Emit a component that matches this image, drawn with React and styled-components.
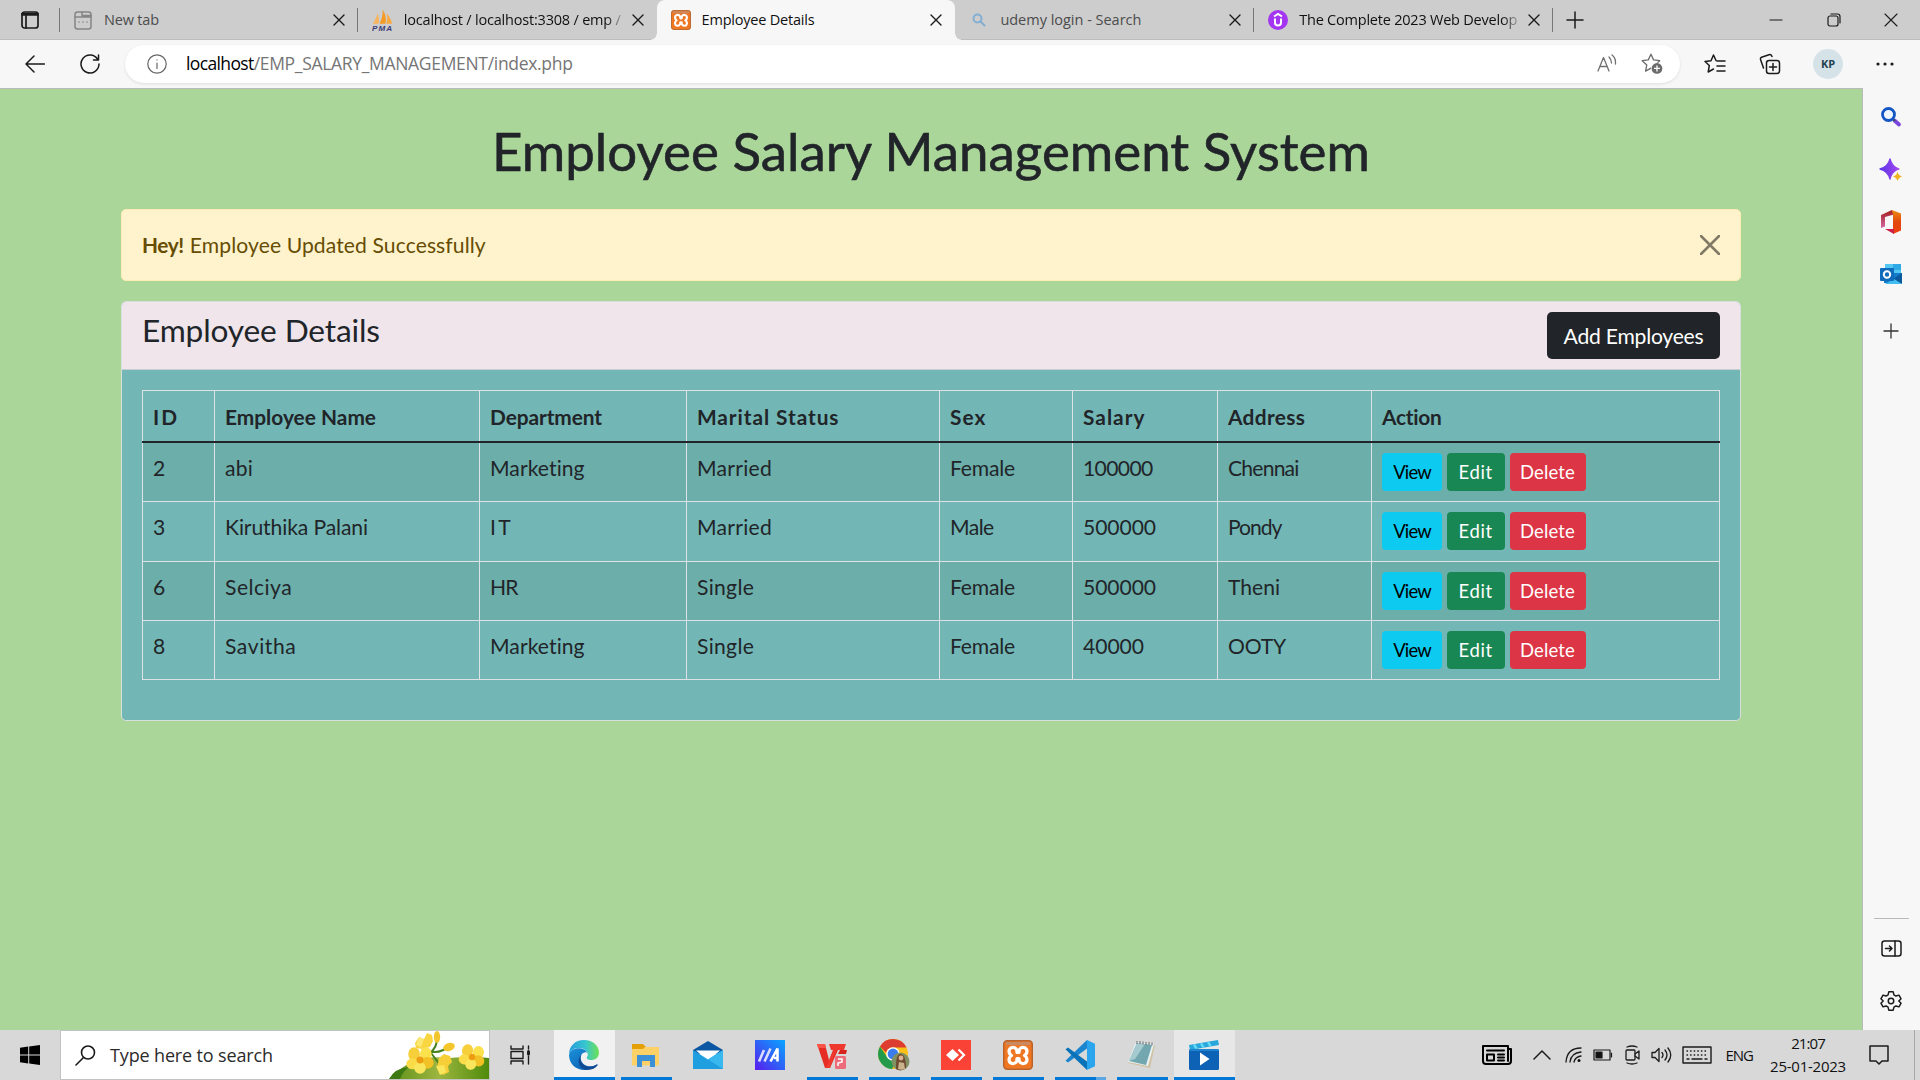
import React, { useLayoutEffect, useRef, useState } from "react";
import styled, { createGlobalStyle, css } from "styled-components";

const uiFont = `"Segoe UI", "Open Sans", "Noto Sans", sans-serif`;
const pageFont = `"Comic Sans MS", Lato, "Open Sans", sans-serif`;

const GlobalStyle = createGlobalStyle`
  *, *::before, *::after { box-sizing: border-box; }
  body { margin: 0; overflow: hidden; background: #d6d6d6; }
  svg { display: block; flex: none; }
  button { font: inherit; border: 0; padding: 0; background: none; color: inherit; }
`;

/* ---------- tracked text ---------- */

const TextRun = styled.span`
  display: inline-block;
  white-space: pre;
`;

function Tracked({ width, children }) {
  const ref = useRef(null);
  const [spacing, setSpacing] = useState(0);
  useLayoutEffect(() => {
    const el = ref.current;
    const count = el.textContent.length;
    if (count > 1) setSpacing((width - el.getBoundingClientRect().width) / (count - 0.5));
  }, [width]);
  return (
    <TextRun ref={ref} style={{ letterSpacing: `${spacing}px` }}>
      {children}
    </TextRun>
  );
}

/* ---------- window ---------- */

const Window = styled.div`
  display: flex;
  flex-direction: column;
  width: 1920px;
  height: 1080px;
  font-family: ${uiFont};
`;

const TabStrip = styled.div`
  display: flex;
  align-items: center;
  height: 40px;
  background: #cdcdcd;
  box-shadow: inset 0 -1px 0 #bdbdbd;
`;

const TabActions = styled.div`
  display: flex;
  align-items: center;
  justify-content: center;
  width: 60px;
  height: 24px;
  margin-right: -1px;
  border-right: 1px solid #777;
`;

const Tab = styled.div`
  position: relative;
  display: flex;
  align-items: center;
  width: 298.8px;
  height: 40px;
  padding: 0 13px 0 14px;
  font-size: 14.5px;
  line-height: 20px;
  color: ${(p) => (p.$muted ? "#4c4c4c" : "#111")};
  ${(p) =>
    p.$active &&
    css`
      background: #f7f7f7;
      border-radius: 8px 8px 0 0;
      &::before, &::after {
        content: "";
        position: absolute;
        bottom: 0;
        width: 6px;
        height: 6px;
      }
      &::before { left: -6px; background: radial-gradient(circle at 0 0, transparent 5px, #f7f7f7 6px); }
      &::after { right: -6px; background: radial-gradient(circle at 100% 0, transparent 5px, #f7f7f7 6px); }
    `}
  ${(p) => p.$divider && css`background: linear-gradient(#777, #777) right center / 1px 24px no-repeat;`}
`;

const TabLabel = styled.div`
  flex: 1;
  min-width: 0;
  margin: 0 3px 0 11px;
  white-space: nowrap;
  ${(p) => p.$fade && css`mask-image: linear-gradient(to right, #000 90%, transparent 99%);`}
`;

const CaptionButtons = styled.div`
  display: flex;
  margin-left: auto;
`;

const CaptionButton = styled.button`
  display: flex;
  align-items: center;
  justify-content: center;
  width: 57.5px;
  height: 40px;
`;

const Toolbar = styled.div`
  display: flex;
  align-items: center;
  height: 48px;
  padding: 0 21px 1px 22px;
  background: #f7f7f7;
`;

const Tool = styled.button`
  display: flex;
  flex: none;
  align-items: center;
  justify-content: center;
  width: ${(p) => p.$w || 26}px;
  height: 32px;
  margin-left: ${(p) => p.$ml || 0}px;
`;

const AddressBar = styled.div`
  display: flex;
  flex: none;
  align-items: center;
  width: 1555px;
  height: 38px;
  margin-left: 22px;
  padding: 0 17px 0 22px;
  border-radius: 19px;
  background: #fff;
  box-shadow: 0 1px 3px rgba(0, 0, 0, 0.1);
`;

const Url = styled.div`
  flex: 1;
  margin: -1px 0 0 19px;
  font-size: 17.5px;
  line-height: 24px;
  color: #757575;
  white-space: nowrap;
`;

const UrlHost = styled.span`
  color: #000;
`;

const Avatar = styled.div`
  display: flex;
  flex: none;
  align-items: center;
  justify-content: center;
  width: 30px;
  height: 30px;
  margin-left: 30px;
  border-radius: 50%;
  background: #d5e2e8;
  color: #24424f;
  font-size: 11px;
  font-weight: 700;
`;

const Workspace = styled.div`
  display: flex;
  height: 942px;
`;

const Page = styled.main`
  width: 1863px;
  padding: 32px 121px 0 121px;
  border-top: 1px solid #b9bab9;
  border-right: 1px solid #b9bab9;
  background: #abd699;
  font-family: ${pageFont};
  font-size: 20px;
  font-size-adjust: 0.535;
  line-height: 30px;
  color: #212529;
`;

const Title = styled.h1`
  margin: 0 0 28px;
  font-size: 50px;
  font-weight: 400;
  line-height: 60px;
  text-align: center;
  -webkit-text-stroke: 0.6px #212529;
`;

const Alert = styled.div`
  display: flex;
  align-items: center;
  height: 72px;
  margin-bottom: 20px;
  padding: 0 20px;
  border: 1px solid #ffecb5;
  border-radius: 5px;
  background: #fff3cd;
  color: #664d03;
  strong { margin-right: 6px; font-weight: 700; }
`;

const Dismiss = styled.button`
  margin-left: auto;
`;

const Card = styled.section`
  height: 420px;
  border: 1px solid #d9dfdc;
  border-radius: 5px;
  overflow: hidden;
  background: #72b7b5;
`;

const CardHeader = styled.header`
  display: flex;
  align-items: flex-start;
  justify-content: space-between;
  height: 68px;
  padding: 10px 20px;
  border-bottom: 1px solid #c9cdd1;
  background: #efe5eb;
`;

const CardTitle = styled.h4`
  margin: 0;
  font-size: 30px;
  font-weight: 400;
  line-height: 36px;
`;

const AddButton = styled.button`
  width: 173px;
  height: 47px;
  border-radius: 5px;
  background: #212529;
  color: #fff;
`;

const Table = styled.table`
  width: 1577px;
  margin: 20px 0 0 20px;
  table-layout: fixed;
  border-collapse: collapse;
  text-align: left;
`;

const HeadCell = styled.th`
  height: 51px;
  padding: 11px 10px 8px;
  border: 1px solid #dee2e6;
  border-bottom: 2px solid #212529;
  font-weight: 700;
  vertical-align: top;
`;

const Row = styled.tr`
  height: ${(p) => p.$h}px;
  background: ${(p) => (p.$striped ? "#6caeaa" : "transparent")};
`;

const Cell = styled.td`
  padding: 10px 10px 0;
  border: 1px solid #dee2e6;
  vertical-align: top;
`;

const Actions = styled.div`
  display: flex;
  gap: 5px;
`;

const tones = {
  view: ["#0dcaf0", "#000", 60],
  edit: ["#198754", "#fff", 57.5],
  delete: ["#dc3545", "#fff", 76],
};

const ActionButton = styled.button`
  width: ${(p) => tones[p.$tone][2]}px;
  height: 38px;
  border-radius: 4px;
  background: ${(p) => tones[p.$tone][0]};
  color: ${(p) => tones[p.$tone][1]};
  font-size: 17.5px;
  line-height: 26px;
`;

const Sidebar = styled.aside`
  display: flex;
  flex-direction: column;
  align-items: center;
  width: 57px;
  padding: 17px 1px 0 0;
  background: #f7f7f7;
`;

const SideItem = styled.div`
  display: flex;
  align-items: center;
  justify-content: center;
  width: 44px;
  height: ${(p) => p.$h || 24}px;
  margin-bottom: ${(p) => p.$gap || 0}px;
`;

const SideRule = styled.div`
  width: 35px;
  height: 1px;
  margin: auto 0 17px;
  background: #bababa;
`;

/* ---------- taskbar ---------- */

const Taskbar = styled.footer`
  display: flex;
  height: 50px;
  background: #d8d8d8;
  color: #111;
`;

const StartButton = styled.div`
  display: flex;
  align-items: center;
  justify-content: center;
  width: 60px;
`;

const SearchBox = styled.div`
  display: flex;
  align-items: center;
  width: 430px;
  padding-left: 14px;
  border: 1px solid #c3c3c3;
  background: #fff;
  color: #2b2b2b;
  font-size: 18px;
`;

const SearchText = styled.div`
  flex: 1;
  margin-left: 14px;
`;

const TaskView = styled.div`
  display: flex;
  align-items: center;
  justify-content: center;
  width: 63.5px;
  padding-right: 3px;
`;

const underline = (p) => {
  if (p.$stacked) return "linear-gradient(to right, #0078d7 80%, #5ba7e4 80%)";
  return p.$running ? "linear-gradient(#0078d7, #0078d7)" : "none";
};

const TaskButton = styled.div`
  display: flex;
  align-items: center;
  justify-content: center;
  width: 61px;
  height: 50px;
  margin-right: 1px;
  padding-right: 1px;
  background-color: ${(p) => (p.$current ? "#f1f1f1" : p.$wide ? "#e7e7e7" : "transparent")};
  background-image: ${underline};
  background-position: center bottom;
  background-size: ${(p) => (p.$wide ? 61 : 51)}px 3px;
  background-repeat: no-repeat;
`;

const Tray = styled.div`
  display: flex;
  align-items: center;
  margin-left: auto;
  padding-right: 5px;
  font-size: 15px;
`;

const TrayItem = styled.div`
  margin-right: ${(p) => p.$mr}px;
`;

const Clock = styled.div`
  width: 80px;
  text-align: center;
  line-height: 23px;
  margin: -1px 21px 0 15px;
`;

const ShowDesktop = styled.div`
  width: 1px;
  height: 50px;
  margin-left: 25px;
  background: #a8a8a8;
`;

/* ---------- icons ---------- */

const Line = ({ w = 20, h = 20, vb, sw = 1.5, color = "#1b1b1b", children }) => (
  <svg width={w} height={h} viewBox={vb || `0 0 ${w} ${h}`} fill="none" stroke={color} strokeWidth={sw} strokeLinecap="round" strokeLinejoin="round">
    {children}
  </svg>
);

const Cross = ({ size = 10, sw = 1.4, color = "#1b1b1b" }) => (
  <Line w={size + 2} h={size + 2} sw={sw} color={color}>
    <path d={`M1 1L${size + 1} ${size + 1}M${size + 1} 1L1 ${size + 1}`} />
  </Line>
);

const Xampp = ({ size }) => (
  <svg width={size} height={size} viewBox="0 0 30 30">
    <rect x="0.7" y="0.7" width="28.6" height="28.6" rx="3.5" fill="#ef7622" stroke="#b7632b" strokeWidth="1.4" />
    <path d="M3 2h24v3H3z" fill="#c98a62" />
    <path
      d="M6 11a4 4 0 0 1 7.500-1.500q.5 1 .5 3h2q0-2 .5-3A4 4 0 0 1 24 11q0 3-2.500 4.500Q24 17 24 20a4 4 0 0 1-7.500 1.500q-.5-1-.5-3h-2q0 2-.5 3A4 4 0 0 1 6 20q0-3 2.500-4.500Q6 14 6 11z"
      fill="none"
      stroke="#fff"
      strokeWidth="3.2"
      strokeLinejoin="round"
    />
  </svg>
);

const PhpMyAdmin = () => (
  <svg width="21" height="24" viewBox="0 0 22 24">
    <path d="M1 16Q5 9 6 5Q8 11 7 16z" fill="#f8b45c" />
    <path d="M8 16Q12 7 11 1Q16 8 14 16z" fill="#f59a24" />
    <path d="M15 16Q17 10 15 5Q20 10 21 16z" fill="#f9a93e" />
    <text x="0" y="23.5" fontFamily="Liberation Sans, sans-serif" fontSize="8.5" fontWeight="700" fontStyle="italic" textLength="21" fill="#3c3d78">PMA</text>
  </svg>
);

const Udemy = () => (
  <svg width="20" height="20" viewBox="0 0 20 20">
    <circle cx="10" cy="10" r="10" fill="#a435f0" />
    <path d="M6 6.500L10 4l4 2.500M7 8.500v4.200c0 3.700 6 3.700 6 0V8.500" fill="none" stroke="#fff" strokeWidth="2" />
  </svg>
);

const starPath = "M10 2l2.400 5.200 5.600.7-4.200 3.900 1.100 5.700L10 14.700l-4.900 2.800 1.100-5.700L2 7.900l5.600-.7z";

const SideSearch = () => (
  <svg width="22" height="22" viewBox="0 0 22 22">
    <path d="M14.500 14.500l4.500 4" stroke="#7b46dc" strokeWidth="3.8" strokeLinecap="round" />
    <path d="M12 12l3 3" stroke="#3d4a63" strokeWidth="2" />
    <circle cx="8.500" cy="8.500" r="6" fill="#eef6ff" stroke="#1556c5" strokeWidth="2.8" />
  </svg>
);

const Sparkle = () => (
  <svg width="24" height="24" viewBox="0 0 24 24">
    <defs>
      <linearGradient id="spark" x1="0" x2="1"><stop stopColor="#5b35e8" /><stop offset="1" stopColor="#a346ef" /></linearGradient>
    </defs>
    <path d="M11 1q2 8 9 10q-7 2-9 10q-2-8-10-10q8-2 10-10z" fill="url(#spark)" stroke="url(#spark)" strokeWidth="1.3" strokeLinejoin="round" />
    <path d="M18.500 14q1 3.500 4.500 4.500q-3.500 1-4.500 4.500q-1-3.500-4.500-4.500q3.500-1 4.500-4.500z" fill="#f0b323" />
  </svg>
);

const Office = () => (
  <svg width="22" height="26" viewBox="0 0 22 26">
    <defs>
      <linearGradient id="offL" x2="0" y2="1"><stop stopColor="#a3201c" /><stop offset="1" stopColor="#d667a4" /></linearGradient>
      <linearGradient id="offR" x2="0" y2="1"><stop stopColor="#ee8d12" /><stop offset=".5" stopColor="#e2480d" /><stop offset="1" stopColor="#ee4010" /></linearGradient>
    </defs>
    <path d="M12 1L1 6v13l4-1.500V8l9-2.500z" fill="url(#offL)" />
    <path d="M12 1l9 3.500v17L13 25V5.500z" fill="url(#offR)" />
    <path d="M5 20h9v5z" fill="#cc2049" />
  </svg>
);

const Outlook = () => (
  <svg width="22" height="22" viewBox="0 0 22 22">
    <path d="M5 1h16v11H5z" fill="#52c7f2" />
    <path d="M13 1h8v6h-8z" fill="#2ea9e6" />
    <path d="M4 20V10h18v10.500z" fill="#137ccb" />
    <path d="M22 10v11l-9-5z" fill="#0b5a9e" />
    <path d="M5 21l9-5 8 5z" fill="#41bdf0" />
    <rect y="5" width="14" height="13" rx="1" fill="#0f6cbd" />
    <circle cx="7" cy="11.5" r="3.2" fill="none" stroke="#fff" strokeWidth="2" />
  </svg>
);

const Edge = () => (
  <svg width="30" height="30" viewBox="0 0 30 30">
    <defs>
      <linearGradient id="edgeTop" x1="0" x2="1"><stop stopColor="#249bd8" /><stop offset=".55" stopColor="#37c6d1" /><stop offset="1" stopColor="#6ee152" /></linearGradient>
      <linearGradient id="edgeLow" x1="0" x2=".8" y2="1"><stop stopColor="#1b93da" /><stop offset="1" stopColor="#0b5bb0" /></linearGradient>
    </defs>
    <path d="M0 15C0 6 6 0 15 0c9 0 15 6 15 12.500C30 17 27 20 22.500 20c-3.800 0-5.500-1.500-4.500-3 .8-1.200 1-2.200.6-3.400C17.500 9.500 13 7.500 8.500 8 4 8.500.5 11.500 0 15z" fill="url(#edgeTop)" />
    <path d="M0 15C1 10.500 5 8.200 9.500 8.200c4 0 7.500 1.700 8.800 4.600-1.800-1-4.600-.5-6 2.200-2 4 .7 9.500 6 11 4 1 7.500-.2 10-1.500C25.500 28 20.500 30 15.500 30 6.500 30 0 23.500 0 15z" fill="url(#edgeLow)" />
    <path d="M12.500 14.500c-2.600 4.500 0 10 5 11.700 4 1.300 8-.2 10-1.700 1-.7 1.500.2 1 1C26 29 21 30.500 16 29.500 9.500 28 7.500 19 12.500 14.500z" fill="#104a92" />
  </svg>
);

const Folder = () => (
  <svg width="28" height="24" viewBox="0 0 28 24">
    <path d="M0 1h11l3 3-2 3H0z" fill="#e3a008" />
    <path d="M0 6h11l2-2h14v18.500H0z" fill="#fdd165" />
    <path d="M5 24V12h18v12h-5v-6h-8v6z" fill="#3d8fd6" />
  </svg>
);

const Mail = () => (
  <svg width="30" height="28" viewBox="0 0 30 28">
    <path d="M0 9L15 0l15 9v4H0z" fill="#0c57a3" />
    <path d="M3 9.500h24L15 20z" fill="#fff" />
    <path d="M0 9v19h30V9L15 18.500z" fill="#1f9ee0" />
    <path d="M30 9v19L15 18.500z" fill="#38b8ef" />
  </svg>
);

const MyAsus = () => (
  <svg width="30" height="30" viewBox="0 0 30 30">
    <defs>
      <linearGradient id="asus" y1="1" x2="1" y2="0"><stop stopColor="#5b1bf0" /><stop offset=".5" stopColor="#2d63f6" /><stop offset="1" stopColor="#0aa5ff" /></linearGradient>
    </defs>
    <rect width="30" height="30" fill="url(#asus)" />
    <path d="M4 21.500L9 10M9.500 21.500l6-13" stroke="#d8dcff" strokeWidth="2.6" />
    <path d="M15.500 21.500L22.500 8.500v13M19 18h3" fill="none" stroke="#fff" strokeWidth="2.6" />
  </svg>
);

const Wps = () => (
  <svg width="32" height="32" viewBox="0 0 32 32">
    <path d="M1 5h8l4 16 4-10h5l-8 18H9z" fill="#e62d24" />
    <path d="M1 5h8l1 4H2z" fill="#fa5347" />
    <path d="M13 5h17l-2 6h-8l-6 18h-4l8-18h-3z" fill="#f0392e" />
    <path d="M24 11h7l-1 4h-8z" fill="#d8231d" />
    <rect x="19" y="17" width="11" height="13" rx="1.5" fill="#ec6d79" />
    <path d="M22 27v-3l4-1v-3h-4" fill="none" stroke="#fff" strokeWidth="1.5" />
  </svg>
);

const Chrome = () => (
  <svg width="34" height="34" viewBox="0 0 34 34">
    <circle cx="16" cy="16" r="15" fill="#fbc116" />
    <path d="M3 8.500A15 15 0 0 1 29.500 9.500H16c-3.500 0-6 2-7 5z" fill="#dc3d30" />
    <path d="M3 8.500A15 15 0 0 0 15 31l5.500-9.800L10 19z" fill="#249a4b" />
    <circle cx="16" cy="16" r="6.8" fill="#fff" />
    <circle cx="16" cy="16" r="5.4" fill="#3b7ded" />
    <circle cx="23.5" cy="23.5" r="9" fill="#7f9163" />
    <path d="M19 31c0-7 0-14 4-15 5 0 6 7 6 14a9 9 0 0 1-10 1z" fill="#704a32" />
    <circle cx="24" cy="20" r="2.4" fill="#ddb390" />
    <path d="M21 31l1-7 5 1 1 6a9 9 0 0 1-7 0z" fill="#c9b28c" />
  </svg>
);

const AnyDesk = () => (
  <svg width="30" height="30" viewBox="0 0 30 30">
    <rect width="30" height="30" fill="#fa4336" />
    <path d="M5 15l6.500-6 6.500 6-6.500 6z" fill="#fff" />
    <path d="M17.500 9.500L23 15l-5.500 5.500" fill="none" stroke="#fff" strokeWidth="2.2" />
  </svg>
);

const VsCode = () => (
  <svg width="30" height="30" viewBox="0 0 30 30">
    <path d="M22 0L6.800 14.500.5 20.800 3 22.500 22 8.500z" fill="#1b86cf" />
    <path d="M.5 9.200L3 7.500l19 14V30L6.800 15.500z" fill="#0a72b8" />
    <path d="M22 0l8 3.700v22.600L22 30z" fill="#2ba5ee" />
  </svg>
);

const Notepad = () => (
  <svg width="30" height="30" viewBox="0 0 30 30">
    <path d="M9 3l19 2-5 23-22-5z" fill="#d0c2a2" />
    <path d="M9 2l18 2-6 22L1 22z" fill="#e8f2f5" />
    <path d="M10 3l15 2-6 20L2 21z" fill="#72a7b0" />
    <path d="M10 3l8 1L8 19l-6 2z" fill="#a5cbd1" />
    <path d="M10 1v3M13 1v3M16 1.500v3M19 2v3M22 2v3M25 2.500v3" stroke="#666" strokeWidth="1" />
  </svg>
);

const Movies = () => (
  <svg width="30" height="30" viewBox="0 0 30 30">
    <path d="M0 5l29-5 1 5-29 5z" fill="#28a7dc" />
    <path d="M5 4.500l2.500 4M12 3.300l2.500 4M19 2.100l2.500 4" stroke="#66d9f6" strokeWidth="2.4" />
    <rect y="9" width="30" height="21" rx="1.5" fill="#0e62b5" />
    <path d="M1 9h28l1 2H0z" fill="#1e84cf" />
    <path d="M11 12.500l9.500 6.500-9.500 6.500z" fill="#fff" />
  </svg>
);

const Blossom = ({ x, y, s = 1, r = 0 }) => (
  <g transform={`translate(${x} ${y}) rotate(${r}) scale(${s})`}>
    <ellipse cx="-6" cy="-6" rx="6" ry="7" fill="#f7cf3b" />
    <ellipse cx="6" cy="-6" rx="6" ry="7" fill="#fbe14c" />
    <ellipse cx="-7.500" cy="4" rx="6.5" ry="5.5" fill="#f9dc48" />
    <ellipse cx="7.500" cy="3" rx="6.500" ry="6" fill="#f1c126" />
    <ellipse cx="0" cy="8" rx="6" ry="6" fill="#fae65c" />
    <circle r="3.5" fill="#ec9d12" />
  </g>
);

const Flowers = () => (
  <svg width="100" height="48" viewBox="0 0 100 48">
    <defs>
      <linearGradient id="leaf" x2="1"><stop stopColor="#5d8f18" /><stop offset=".5" stopColor="#9db640" /><stop offset="1" stopColor="#4f8b0b" /></linearGradient>
    </defs>
    <path d="M0 48Q24 22 60 27Q84 25 100 27V48z" fill="url(#leaf)" />
    <path d="M0 48Q6 37 20 36Q14 40 11 48z" fill="#3e7a13" />
    <path d="M34 25Q46 22 48 10M43 21Q54 22 62 13M42 22L52 35" fill="none" stroke="#46801d" strokeWidth="2" />
    <path d="M26 12l4-6 5 2 3-6 5 2 1 6-3 6-8 2-6-1z" fill="#f8d541" />
    <path d="M30 6l5 2-3 8-5-2z" fill="#fbe873" />
    <ellipse cx="48" cy="6" rx="3.2" ry="6" fill="#f1c52d" />
    <ellipse cx="60" cy="16" rx="6" ry="4" fill="#f3c62b" transform="rotate(-20 60 16)" />
    <Blossom x={31} y={29} s={0.98} />
    <path d="M50 27l5-4 6 2 2 6-4 4 1 6-6 3-6-7z" fill="#f6cf38" />
    <path d="M47 35l8-1 2 7-6 3z" fill="#fae65c" />
    <Blossom x={83} y={26} s={0.92} r={10} />
  </svg>
);

/* ---------- content ---------- */

const tabs = [
  { label: "New tab", width: 55, muted: true, divider: true, icon: (
    <Line w={20} h={19} sw={1.5} color="#858585">
      <rect x="2" y="1" width="16" height="17" rx="2.5" /><path d="M2 6h16M9 1v3.500h9M6 11h.1M10 11h.1M14 11h.1" />
    </Line>) },
  { label: "localhost / localhost:3308 / emp /", width: 217, fade: true, icon: <PhpMyAdmin /> },
  { label: "Employee Details", width: 113, active: true, icon: <Xampp size={20} /> },
  { label: "udemy login - Search", width: 141, muted: true, divider: true, icon: (
    <Line w={20} h={16} sw={2} color="#82aed2"><circle cx="8.500" cy="6.500" r="4" /><path d="M11.500 9.500l4 4" /></Line>) },
  { label: "The Complete 2023 Web Develop", width: 218, fade: true, divider: true, icon: <Udemy /> },
];

const columns = [
  ["ID", 25, 72], ["Employee Name", 151, 265], ["Department", 112, 207], ["Marital Status", 142, 253],
  ["Sex", 36, 133], ["Salary", 62, 145], ["Address", 77, 154], ["Action", 60, 348],
];

const employees = [
  [["2", 11], ["abi", 28], ["Marketing", 95], ["Married", 75], ["Female", 65], ["100000", 70], ["Chennai", 71]],
  [["3", 11], ["Kiruthika Palani", 143], ["IT", 22], ["Married", 75], ["Male", 44], ["500000", 73], ["Pondy", 54]],
  [["6", 11], ["Selciya", 67], ["HR", 28], ["Single", 57], ["Female", 65], ["500000", 73], ["Theni", 52]],
  [["8", 11], ["Savitha", 71], ["Marketing", 95], ["Single", 57], ["Female", 65], ["40000", 61], ["OOTY", 58]],
];
const rowHeights = [60, 60, 59, 59];

const taskbarApps = [
  { icon: <Edge />, running: true, wide: true, current: true },
  { icon: <Folder />, running: true },
  { icon: <Mail /> },
  { icon: <MyAsus /> },
  { icon: <Wps />, running: true },
  { icon: <Chrome />, running: true },
  { icon: <AnyDesk />, running: true },
  { icon: <Xampp size={30} />, running: true },
  { icon: <VsCode />, running: true, stacked: true },
  { icon: <Notepad />, running: true },
  { icon: <Movies />, running: true, wide: true },
];

function BrowserTabs() {
  return (
    <TabStrip>
      <TabActions>
        <Line w={18} h={18} sw={1.7}><rect x="1" y="1" width="16" height="16" rx="2.5" /><path d="M1 4h16M1 2.500h16M5 5v12" /></Line>
      </TabActions>
      {tabs.map((t) => (
        <Tab key={t.label} $active={t.active} $muted={t.muted} $divider={t.divider}>
          {t.icon}
          <TabLabel $fade={t.fade}><Tracked width={t.width}>{t.label}</Tracked></TabLabel>
          <Cross />
        </Tab>
      ))}
      <Tool $w={36} $ml={4}><Line w={18} h={18}><path d="M9 1v16M1 9h16" /></Line></Tool>
      <CaptionButtons>
        <CaptionButton><Line w={14} h={14} sw={1.2}><path d="M1 7h12" /></Line></CaptionButton>
        <CaptionButton><Line w={14} h={14} sw={1.2}><rect x="1" y="3" width="10" height="10" rx="2" /><path d="M4 1h6.500Q13 1 13 3.500V10" /></Line></CaptionButton>
        <CaptionButton><Cross size={12} sw={1.1} /></CaptionButton>
      </CaptionButtons>
    </TabStrip>
  );
}

function BrowserToolbar() {
  return (
    <Toolbar>
      <Tool><Line w={20} h={18}><path d="M19.500 9H1M9 1L1 9l8 8" /></Line></Tool>
      <Tool $ml={29}><Line w={20} h={20}><path d="M17.500 5A9 9 0 1 0 19 10M18.500 1v5h-5" /></Line></Tool>
      <AddressBar>
        <Line w={20} h={20} sw={1.2} color="#666"><circle cx="10" cy="10" r="9.2" /><path d="M10 9v5.500M10 5.800v.2" /></Line>
        <Url>
          <UrlHost><Tracked width={68}>localhost</Tracked></UrlHost>
          <Tracked width={319}>/EMP_SALARY_MANAGEMENT/index.php</Tracked>
        </Url>
        <Line w={20} h={20} sw={1.3} color="#707070"><path d="M1 17L6.500 3.500 12 17M3 12.500h7M12 3q2.500 2.500 2.500 6M15 1q4 3 3.500 9" /></Line>
        <Tool $ml={22} $w={24}>
          <svg width="23" height="23" viewBox="0 0 21 21">
            <path d={starPath} fill="none" stroke="#6b6b6b" strokeWidth="1.2" strokeLinejoin="round" />
            <circle cx="15.5" cy="15" r="5.5" fill="#fff" /><circle cx="15.5" cy="15" r="4.9" fill="#6b6b6b" />
            <path d="M15.500 12.300v5.400M12.800 15h5.400" stroke="#fff" strokeWidth="1.2" />
          </svg>
        </Tool>
      </AddressBar>
      <Tool $ml={22}>
        <Line w={22} h={20} sw={1.5}><path d="M12 6.500L9.500 1 7 6.700 1 7.500l4.300 4L4.200 18l5.300-3M13 7h8M13 12h8M13 17h8" /></Line>
      </Tool>
      <Tool $ml={29}>
        <Line w={22} h={22} sw={1.5}><rect x="7.500" y="7.500" width="13" height="13" rx="2.5" /><path d="M14 10.500v7M10.500 14h7M4.500 15l-3-8.500Q1 5 2.500 4.300L10 1.700q2-.7 3 1.800" /></Line>
      </Tool>
      <Avatar>KP</Avatar>
      <Tool $ml={28} $w={28}>
        <svg width="18" height="4" viewBox="0 0 18 4" fill="#1b1b1b"><circle cx="2" cy="2" r="1.6" /><circle cx="9" cy="2" r="1.6" /><circle cx="16" cy="2" r="1.6" /></svg>
      </Tool>
    </Toolbar>
  );
}

function EmployeeTable() {
  return (
    <Table>
      <colgroup>{columns.map(([name, , w]) => <col key={name} width={w} />)}</colgroup>
      <thead>
        <tr>{columns.map(([name, w]) => <HeadCell key={name}><Tracked width={w}>{name}</Tracked></HeadCell>)}</tr>
      </thead>
      <tbody>
        {employees.map((cells, i) => (
          <Row key={i} $h={rowHeights[i]} $striped={i % 2 === 0}>
            {cells.map(([text, w], j) => <Cell key={j}><Tracked width={w}>{text}</Tracked></Cell>)}
            <Cell>
              <Actions>
                <ActionButton $tone="view"><Tracked width={38}>View</Tracked></ActionButton>
                <ActionButton $tone="edit"><Tracked width={34}>Edit</Tracked></ActionButton>
                <ActionButton $tone="delete"><Tracked width={55}>Delete</Tracked></ActionButton>
              </Actions>
            </Cell>
          </Row>
        ))}
      </tbody>
    </Table>
  );
}

function EdgeSidebar() {
  return (
    <Sidebar>
      <SideItem $gap={29}><SideSearch /></SideItem>
      <SideItem $gap={27}><Sparkle /></SideItem>
      <SideItem $h={26} $gap={27}><Office /></SideItem>
      <SideItem $gap={33}><Outlook /></SideItem>
      <SideItem><Line w={16} h={16} sw={1.3} color="#333"><path d="M8 1v14M1 8h14" /></Line></SideItem>
      <SideRule />
      <SideItem $gap={29}>
        <Line w={21} h={17} sw={1.5}><rect x="1" y="1" width="19" height="15" rx="2.5" /><path d="M14 1v15M4.500 8.500H11M8.500 6L11 8.500 8.500 11" /></Line>
      </SideItem>
      <SideItem $gap={17}>
        <Line w={22} h={22} vb="0 0 24 24" sw={1.6}>
          <circle cx="12" cy="12" r="3" />
          <path d="M9.600 2h4.800l.8 3.300 2.200 1.300 3.300-1 2.300 4-2.500 2.400 2.500 2.400-2.300 4-3.300-1-2.200 1.300-.8 3.300H9.600l-.8-3.300-2.200-1.300-3.300 1-2.300-4L3.500 12 1 9.600l2.300-4 3.300 1 2.200-1.300z" />
        </Line>
      </SideItem>
    </Sidebar>
  );
}

function SystemTray() {
  return (
    <Tray>
      <TrayItem $mr={21}>
        <Line w={30} h={20} sw={2} color="#000">
          <path d="M26 4V1H1v15q0 3 3 3h22q3 0 3-3V4h-3v12M5 5.500h17M16 9.500h6M16 12.500h6M16 15.500h6" /><rect x="5" y="9.500" width="7" height="6" />
        </Line>
      </TrayItem>
      <TrayItem $mr={14}><Line w={18} h={10}><path d="M1 9l8-8 8 8" /></Line></TrayItem>
      <TrayItem $mr={11}>
        <Line w={17} h={18} sw={1.3}><path d="M1 16Q2 2 16 2M5 16Q6 7 16 6M9 16Q10 11 16 10" /><circle cx="14" cy="14.500" r="1.5" fill="#111" stroke="none" /></Line>
      </TrayItem>
      <TrayItem $mr={12}>
        <Line w={20} h={12} sw={1.2}><path d="M1 1h16v10H1zM18.500 4v4" /><path d="M3 3h6v6H3z" fill="#111" /></Line>
      </TrayItem>
      <TrayItem $mr={11}>
        <Line w={15} h={20} sw={1.3}><rect x="1" y="5" width="9" height="10" rx="1" /><path d="M10 9l4-3v8l-4-3M2 2Q7 0 12 2M2 18q5 2 10 0" /></Line>
      </TrayItem>
      <TrayItem $mr={10}>
        <Line w={21} h={18} sw={1.3}><path d="M1 6.500h3l4-4v13l-4-4H1zM11 6.500q2 2.500 0 5M14 4q4 5 0 10M17 2q5.500 7 0 14" /></Line>
      </TrayItem>
      <TrayItem $mr={14}>
        <Line w={30} h={18} sw={1.4}><rect x="1" y="1" width="28" height="16" /><path d="M5 5h20M5 9h20" strokeDasharray="0.5 3.1" /><path d="M5 13h2M10 13h10M23 13h2" /></Line>
      </TrayItem>
      <Tracked width={28}>ENG</Tracked>
      <Clock><Tracked width={34}>21:07</Tracked><br /><Tracked width={76}>25-01-2023</Tracked></Clock>
      <Line w={20} h={21} sw={1.5}><path d="M1 1h18v15h-6l-3 3-3-3H1z" /></Line>
      <ShowDesktop />
    </Tray>
  );
}

export default function App() {
  return (
    <Window>
      <GlobalStyle />
      <BrowserTabs />
      <BrowserToolbar />
      <Workspace>
        <Page>
          <Title><Tracked width={878}>Employee Salary Management System</Tracked></Title>
          <Alert>
            <strong><Tracked width={42}>Hey!</Tracked></strong>
            <Tracked width={296}>Employee Updated Successfully</Tracked>
            <Dismiss><Cross size={18} sw={2.5} color="#807966" /></Dismiss>
          </Alert>
          <Card>
            <CardHeader>
              <CardTitle><Tracked width={238}>Employee Details</Tracked></CardTitle>
              <AddButton><Tracked width={140}>Add Employees</Tracked></AddButton>
            </CardHeader>
            <EmployeeTable />
          </Card>
        </Page>
        <EdgeSidebar />
      </Workspace>
      <Taskbar>
        <StartButton>
          <svg width="20" height="20" viewBox="0 0 20 20"><path d="M0 2.800L8.200 1.600v7.900H0zM9.200 1.500L20 0v9.500H9.200zM0 10.500h8.200v7.900L0 17.200zM9.200 10.500H20V20L9.200 18.500z" /></svg>
        </StartButton>
        <SearchBox>
          <Line w={21} h={21} sw={1.6}><circle cx="13" cy="7.500" r="6.5" /><path d="M8.500 12.500L1 20" /></Line>
          <SearchText><Tracked width={163}>Type here to search</Tracked></SearchText>
          <Flowers />
        </SearchBox>
        <TaskView>
          <Line w={21} h={20} sw={1.4}><path d="M1 1v3h12V1M1 19v-3h12v3M1 6.500h12v7H1zM18.500 1v3M18.500 11v8" /><path d="M18.500 6.500v2.500" strokeWidth="3" /></Line>
        </TaskView>
        {taskbarApps.map((a, i) => (
          <TaskButton key={i} $running={a.running} $wide={a.wide} $current={a.current} $stacked={a.stacked}>{a.icon}</TaskButton>
        ))}
        <SystemTray />
      </Taskbar>
    </Window>
  );
}
